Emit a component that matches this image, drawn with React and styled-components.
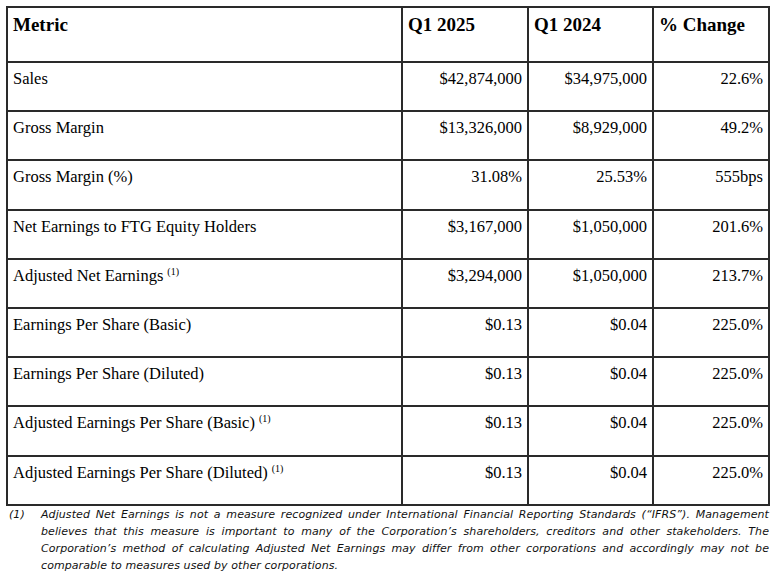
import React from 'react'
import styled, { createGlobalStyle } from 'styled-components'

const GlobalStyle = createGlobalStyle`
  html, body {
    margin: 0;
    padding: 0;
    background: #fff;
  }
`

const rows = [
  { metric: 'Sales', q25: '$42,874,000', q24: '$34,975,000', change: '22.6%' },
  { metric: 'Gross Margin', q25: '$13,326,000', q24: '$8,929,000', change: '49.2%' },
  { metric: 'Gross Margin (%)', q25: '31.08%', q24: '25.53%', change: '555bps' },
  { metric: 'Net Earnings to FTG Equity Holders', q25: '$3,167,000', q24: '$1,050,000', change: '201.6%' },
  { metric: 'Adjusted Net Earnings', note: true, q25: '$3,294,000', q24: '$1,050,000', change: '213.7%' },
  { metric: 'Earnings Per Share (Basic)', q25: '$0.13', q24: '$0.04', change: '225.0%' },
  { metric: 'Earnings Per Share (Diluted)', q25: '$0.13', q24: '$0.04', change: '225.0%' },
  { metric: 'Adjusted Earnings Per Share (Basic)', note: true, q25: '$0.13', q24: '$0.04', change: '225.0%' },
  { metric: 'Adjusted Earnings Per Share (Diluted)', note: true, q25: '$0.13', q24: '$0.04', change: '225.0%' },
]

const App = () => {
  return (
    <Page>
      <GlobalStyle />
      <Table>
        <colgroup>
          <col style={{ width: 395 }} />
          <col style={{ width: 126 }} />
          <col style={{ width: 125 }} />
          <col style={{ width: 116 }} />
        </colgroup>
        <thead>
          <tr>
            <Th>Metric</Th>
            <Th>Q1 2025</Th>
            <Th>Q1 2024</Th>
            <Th>% Change</Th>
          </tr>
        </thead>
        <tbody>
          {rows.map((r) => (
            <tr key={r.metric}>
              <Td>
                {r.metric}
                {r.note && <Sup>(1)</Sup>}
              </Td>
              <Td $num>{r.q25}</Td>
              <Td $num>{r.q24}</Td>
              <Td $num>{r.change}</Td>
            </tr>
          ))}
        </tbody>
      </Table>
      <Footnote>
        <NoteMark>(1)</NoteMark>
        <NoteText>
          Adjusted Net Earnings is not a measure recognized under International
          Financial Reporting Standards (“IFRS”). Management believes that this
          measure is important to many of the Corporation’s shareholders,
          creditors and other stakeholders. The Corporation’s method of
          calculating Adjusted Net Earnings may differ from other corporations
          and accordingly may not be comparable to measures used by other
          corporations.
        </NoteText>
      </Footnote>
    </Page>
  )
}

export default App

const Page = styled.div`
  padding: 6px 8px 0 6px;
  width: 777px;
  box-sizing: border-box;
`

const Table = styled.table`
  border-collapse: collapse;
  table-layout: fixed;
  width: 763px;
  font-family: 'Liberation Serif', 'Times New Roman', serif;
  color: #000;
  border: 2px solid #222;

  tbody tr {
    height: 49.2px;
  }
`

const Th = styled.th`
  border: 2px solid #2a2a2a;
  height: 48px;
  padding: 5px 5px 0;
  text-align: left;
  vertical-align: top;
  font-size: 19px;
  font-weight: bold;
  line-height: 24px;
`

const Td = styled.td`
  border: 2px solid #2a2a2a;
  padding: 5px 5px 0;
  text-align: ${(p) => (p.$num ? 'right' : 'left')};
  vertical-align: top;
  font-size: 16.5px;
  line-height: 22px;
  white-space: nowrap;
`

const Sup = styled.sup`
  font-size: 10px;
  margin-left: 4px;
  vertical-align: 6px;
  line-height: 0;
`

const Footnote = styled.div`
  display: flex;
  margin-top: 0;
  font-family: 'DejaVu Sans', 'Liberation Sans', sans-serif;
  font-style: italic;
  font-size: 11px;
  letter-spacing: 0.08px;
  line-height: 17px;
  color: #111;
`

const NoteMark = styled.span`
  width: 32px;
  flex: none;
  padding-left: 3px;
`

const NoteText = styled.p`
  margin: 0;
  flex: 1;
  text-align: justify;
`
